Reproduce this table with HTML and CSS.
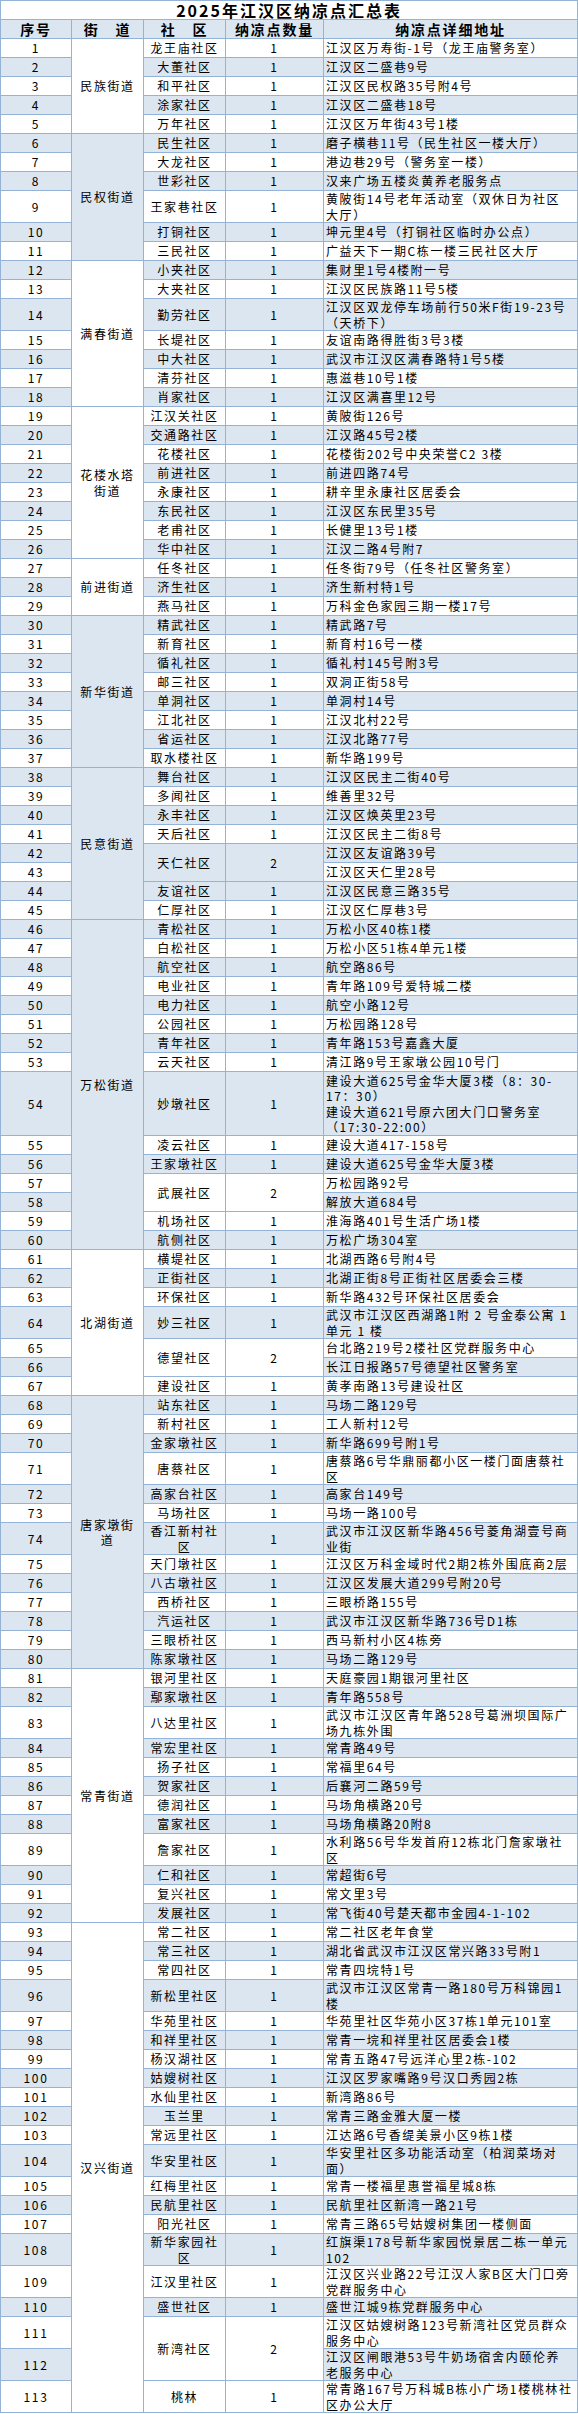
FILE: index.html
```html
<!DOCTYPE html>
<html lang="zh-CN">
<head>
<meta charset="utf-8">
<title>2025年江汉区纳凉点汇总表</title>
<link rel="stylesheet" href="styles.css">
</head>
<body>
<table class="sheet">
<colgroup><col class="c1"><col class="c2"><col class="c3"><col class="c4"><col class="c5"></colgroup>
<tr class="title-row"><td colspan="5" class="title">2025年江汉区纳凉点汇总表</td></tr>
<tr class="head-row"><th>序号</th><th>街　道</th><th>社　区</th><th>纳凉点数量</th><th>纳凉点详细地址</th></tr>

<tr class="r1"><td>1</td><td rowspan="5">民族街道</td><td>龙王庙社区</td><td>1</td><td class="addr">江汉区万寿街-1号（龙王庙警务室）</td></tr>
<tr class="r1 b"><td>2</td><td>大董社区</td><td>1</td><td class="addr">江汉区二盛巷9号</td></tr>
<tr class="r1"><td>3</td><td>和平社区</td><td>1</td><td class="addr">江汉区民权路35号附4号</td></tr>
<tr class="r1 b"><td>4</td><td>涂家社区</td><td>1</td><td class="addr">江汉区二盛巷18号</td></tr>
<tr class="r1"><td>5</td><td>万年社区</td><td>1</td><td class="addr">江汉区万年街43号1楼</td></tr>

<tr class="r1 b"><td>6</td><td rowspan="6">民权街道</td><td>民生社区</td><td>1</td><td class="addr">磨子横巷11号（民生社区一楼大厅）</td></tr>
<tr class="r1"><td>7</td><td>大龙社区</td><td>1</td><td class="addr">港边巷29号（警务室一楼）</td></tr>
<tr class="r1 b"><td>8</td><td>世彩社区</td><td>1</td><td class="addr">汉来广场五楼炎黄养老服务点</td></tr>
<tr class="r2"><td>9</td><td>王家巷社区</td><td>1</td><td class="addr">黄陂街14号老年活动室（双休日为社区<br>大厅）</td></tr>
<tr class="r1 b"><td>10</td><td>打铜社区</td><td>1</td><td class="addr">坤元里4号（打铜社区临时办公点）</td></tr>
<tr class="r1"><td>11</td><td>三民社区</td><td>1</td><td class="addr">广益天下一期C栋一楼三民社区大厅</td></tr>

<tr class="r1 b"><td>12</td><td rowspan="7" class="white">满春街道</td><td>小夹社区</td><td>1</td><td class="addr">集财里1号4楼附一号</td></tr>
<tr class="r1"><td>13</td><td>大夹社区</td><td>1</td><td class="addr">江汉区民族路11号5楼</td></tr>
<tr class="r2 b"><td>14</td><td>勤劳社区</td><td>1</td><td class="addr">江汉区双龙停车场前行50米F街19-23号<br>（天桥下）</td></tr>
<tr class="r1"><td>15</td><td>长堤社区</td><td>1</td><td class="addr">友谊南路得胜街3号3楼</td></tr>
<tr class="r1 b"><td>16</td><td>中大社区</td><td>1</td><td class="addr">武汉市江汉区满春路特1号5楼</td></tr>
<tr class="r1"><td>17</td><td>清芬社区</td><td>1</td><td class="addr">惠滋巷10号1楼</td></tr>
<tr class="r1 b"><td>18</td><td>肖家社区</td><td>1</td><td class="addr">江汉区满喜里12号</td></tr>

<tr class="r1"><td>19</td><td rowspan="8">花楼水塔<br>街道</td><td>江汉关社区</td><td>1</td><td class="addr">黄陂街126号</td></tr>
<tr class="r1 b"><td>20</td><td>交通路社区</td><td>1</td><td class="addr">江汉路45号2楼</td></tr>
<tr class="r1"><td>21</td><td>花楼社区</td><td>1</td><td class="addr">花楼街202号中央荣誉C2 3楼</td></tr>
<tr class="r1 b"><td>22</td><td>前进社区</td><td>1</td><td class="addr">前进四路74号</td></tr>
<tr class="r1"><td>23</td><td>永康社区</td><td>1</td><td class="addr">耕辛里永康社区居委会</td></tr>
<tr class="r1 b"><td>24</td><td>东民社区</td><td>1</td><td class="addr">江汉区东民里35号</td></tr>
<tr class="r1"><td>25</td><td>老甫社区</td><td>1</td><td class="addr">长健里13号1楼</td></tr>
<tr class="r1 b"><td>26</td><td>华中社区</td><td>1</td><td class="addr">江汉二路4号附7</td></tr>

<tr class="r1"><td>27</td><td rowspan="3">前进街道</td><td>任冬社区</td><td>1</td><td class="addr">任冬街79号（任冬社区警务室）</td></tr>
<tr class="r1 b"><td>28</td><td>济生社区</td><td>1</td><td class="addr">济生新村特1号</td></tr>
<tr class="r1"><td>29</td><td>燕马社区</td><td>1</td><td class="addr">万科金色家园三期一楼17号</td></tr>

<tr class="r1 b"><td>30</td><td rowspan="8">新华街道</td><td>精武社区</td><td>1</td><td class="addr">精武路7号</td></tr>
<tr class="r1"><td>31</td><td>新育社区</td><td>1</td><td class="addr">新育村16号一楼</td></tr>
<tr class="r1 b"><td>32</td><td>循礼社区</td><td>1</td><td class="addr">循礼村145号附3号</td></tr>
<tr class="r1"><td>33</td><td>邮三社区</td><td>1</td><td class="addr">双洞正街58号</td></tr>
<tr class="r1 b"><td>34</td><td>单洞社区</td><td>1</td><td class="addr">单洞村14号</td></tr>
<tr class="r1"><td>35</td><td>江北社区</td><td>1</td><td class="addr">江汉北村22号</td></tr>
<tr class="r1 b"><td>36</td><td>省运社区</td><td>1</td><td class="addr">江汉北路77号</td></tr>
<tr class="r1"><td>37</td><td>取水楼社区</td><td>1</td><td class="addr">新华路199号</td></tr>

<tr class="r1 b"><td>38</td><td rowspan="8">民意街道</td><td>舞台社区</td><td>1</td><td class="addr">江汉区民主二街40号</td></tr>
<tr class="r1"><td>39</td><td>多闻社区</td><td>1</td><td class="addr">维善里32号</td></tr>
<tr class="r1 b"><td>40</td><td>永丰社区</td><td>1</td><td class="addr">江汉区焕英里23号</td></tr>
<tr class="r1"><td>41</td><td>天后社区</td><td>1</td><td class="addr">江汉区民主二街8号</td></tr>
<tr class="r1 b"><td>42</td><td rowspan="2">天仁社区</td><td rowspan="2">2</td><td class="addr">江汉区友谊路39号</td></tr>
<tr class="r1"><td>43</td><td class="addr">江汉区天仁里28号</td></tr>
<tr class="r1 b"><td>44</td><td>友谊社区</td><td>1</td><td class="addr">江汉区民意三路35号</td></tr>
<tr class="r1"><td>45</td><td>仁厚社区</td><td>1</td><td class="addr">江汉区仁厚巷3号</td></tr>

<tr class="r1 b"><td>46</td><td rowspan="15">万松街道</td><td>青松社区</td><td>1</td><td class="addr">万松小区40栋1楼</td></tr>
<tr class="r1"><td>47</td><td>白松社区</td><td>1</td><td class="addr">万松小区51栋4单元1楼</td></tr>
<tr class="r1 b"><td>48</td><td>航空社区</td><td>1</td><td class="addr">航空路86号</td></tr>
<tr class="r1"><td>49</td><td>电业社区</td><td>1</td><td class="addr">青年路109号爱特城二楼</td></tr>
<tr class="r1 b"><td>50</td><td>电力社区</td><td>1</td><td class="addr">航空小路12号</td></tr>
<tr class="r1"><td>51</td><td>公园社区</td><td>1</td><td class="addr">万松园路128号</td></tr>
<tr class="r1 b"><td>52</td><td>青年社区</td><td>1</td><td class="addr">青年路153号嘉鑫大厦</td></tr>
<tr class="r1"><td>53</td><td>云天社区</td><td>1</td><td class="addr">清江路9号王家墩公园10号门</td></tr>
<tr class="r4 b"><td>54</td><td>妙墩社区</td><td>1</td><td class="addr">建设大道625号金华大厦3楼（8：30-<br>17：30）<br>建设大道621号原六团大门口警务室<br>（17:30-22:00）</td></tr>
<tr class="r1"><td>55</td><td>凌云社区</td><td>1</td><td class="addr">建设大道417-158号</td></tr>
<tr class="r1 b"><td>56</td><td>王家墩社区</td><td>1</td><td class="addr">建设大道625号金华大厦3楼</td></tr>
<tr class="r1"><td>57</td><td rowspan="2">武展社区</td><td rowspan="2">2</td><td class="addr">万松园路92号</td></tr>
<tr class="r1 b"><td>58</td><td class="addr">解放大道684号</td></tr>
<tr class="r1"><td>59</td><td>机场社区</td><td>1</td><td class="addr">淮海路401号生活广场1楼</td></tr>
<tr class="r1 b"><td>60</td><td>航侧社区</td><td>1</td><td class="addr">万松广场304室</td></tr>

<tr class="r1"><td>61</td><td rowspan="7">北湖街道</td><td>横堤社区</td><td>1</td><td class="addr">北湖西路6号附4号</td></tr>
<tr class="r1 b"><td>62</td><td>正街社区</td><td>1</td><td class="addr">北湖正街8号正街社区居委会三楼</td></tr>
<tr class="r1"><td>63</td><td>环保社区</td><td>1</td><td class="addr">新华路432号环保社区居委会</td></tr>
<tr class="r2 b"><td>64</td><td>妙三社区</td><td>1</td><td class="addr">武汉市江汉区西湖路1附 2 号金泰公寓 1<br>单元 1 楼</td></tr>
<tr class="r1"><td>65</td><td rowspan="2">德望社区</td><td rowspan="2">2</td><td class="addr">台北路219号2楼社区党群服务中心</td></tr>
<tr class="r1 b"><td>66</td><td class="addr">长江日报路57号德望社区警务室</td></tr>
<tr class="r1"><td>67</td><td>建设社区</td><td>1</td><td class="addr">黄孝南路13号建设社区</td></tr>

<tr class="r1 b"><td>68</td><td rowspan="13">唐家墩街<br>道</td><td>站东社区</td><td>1</td><td class="addr">马场二路129号</td></tr>
<tr class="r1"><td>69</td><td>新村社区</td><td>1</td><td class="addr">工人新村12号</td></tr>
<tr class="r1 b"><td>70</td><td>金家墩社区</td><td>1</td><td class="addr">新华路699号附1号</td></tr>
<tr class="r2"><td>71</td><td>唐蔡社区</td><td>1</td><td class="addr">唐蔡路6号华鼎丽都小区一楼门面唐蔡社<br>区</td></tr>
<tr class="r1 b"><td>72</td><td>高家台社区</td><td>1</td><td class="addr">高家台149号</td></tr>
<tr class="r1"><td>73</td><td>马场社区</td><td>1</td><td class="addr">马场一路100号</td></tr>
<tr class="r2 b"><td>74</td><td>香江新村社<br>区</td><td>1</td><td class="addr">武汉市江汉区新华路456号菱角湖壹号商<br>业街</td></tr>
<tr class="r1"><td>75</td><td>天门墩社区</td><td>1</td><td class="addr">江汉区万科金域时代2期2栋外围底商2层</td></tr>
<tr class="r1 b"><td>76</td><td>八古墩社区</td><td>1</td><td class="addr">江汉区发展大道299号附20号</td></tr>
<tr class="r1"><td>77</td><td>西桥社区</td><td>1</td><td class="addr">三眼桥路155号</td></tr>
<tr class="r1 b"><td>78</td><td>汽运社区</td><td>1</td><td class="addr">武汉市江汉区新华路736号D1栋</td></tr>
<tr class="r1"><td>79</td><td>三眼桥社区</td><td>1</td><td class="addr">西马新村小区4栋旁</td></tr>
<tr class="r1 b"><td>80</td><td>陈家墩社区</td><td>1</td><td class="addr">马场二路129号</td></tr>

<tr class="r1"><td>81</td><td rowspan="12">常青街道</td><td>银河里社区</td><td>1</td><td class="addr">天庭豪园1期银河里社区</td></tr>
<tr class="r1 b"><td>82</td><td>鄢家墩社区</td><td>1</td><td class="addr">青年路558号</td></tr>
<tr class="r2"><td>83</td><td>八达里社区</td><td>1</td><td class="addr">武汉市江汉区青年路528号葛洲坝国际广<br>场九栋外围</td></tr>
<tr class="r1 b"><td>84</td><td>常宏里社区</td><td>1</td><td class="addr">常青路49号</td></tr>
<tr class="r1"><td>85</td><td>扬子社区</td><td>1</td><td class="addr">常福里64号</td></tr>
<tr class="r1 b"><td>86</td><td>贺家社区</td><td>1</td><td class="addr">后襄河二路59号</td></tr>
<tr class="r1"><td>87</td><td>德润社区</td><td>1</td><td class="addr">马场角横路20号</td></tr>
<tr class="r1 b"><td>88</td><td>富家社区</td><td>1</td><td class="addr">马场角横路20附8</td></tr>
<tr class="r2"><td>89</td><td>詹家社区</td><td>1</td><td class="addr">水利路56号华发首府12栋北门詹家墩社<br>区</td></tr>
<tr class="r1 b"><td>90</td><td>仁和社区</td><td>1</td><td class="addr">常超街6号</td></tr>
<tr class="r1"><td>91</td><td>复兴社区</td><td>1</td><td class="addr">常文里3号</td></tr>
<tr class="r1 b"><td>92</td><td>发展社区</td><td>1</td><td class="addr">常飞街40号楚天都市金园4-1-102</td></tr>

<tr class="r1"><td>93</td><td rowspan="21">汉兴街道</td><td>常二社区</td><td>1</td><td class="addr">常二社区老年食堂</td></tr>
<tr class="r1 b"><td>94</td><td>常三社区</td><td>1</td><td class="addr">湖北省武汉市江汉区常兴路33号附1</td></tr>
<tr class="r1"><td>95</td><td>常四社区</td><td>1</td><td class="addr">常青四垸特1号</td></tr>
<tr class="r2 b"><td>96</td><td>新松里社区</td><td>1</td><td class="addr">武汉市江汉区常青一路180号万科锦园1<br>楼</td></tr>
<tr class="r1"><td>97</td><td>华苑里社区</td><td>1</td><td class="addr">华苑里社区华苑小区37栋1单元101室</td></tr>
<tr class="r1 b"><td>98</td><td>和祥里社区</td><td>1</td><td class="addr">常青一垸和祥里社区居委会1楼</td></tr>
<tr class="r1"><td>99</td><td>杨汉湖社区</td><td>1</td><td class="addr">常青五路47号远洋心里2栋-102</td></tr>
<tr class="r1 b"><td>100</td><td>姑嫂树社区</td><td>1</td><td class="addr">江汉区罗家嘴路9号汉口秀园2栋</td></tr>
<tr class="r1"><td>101</td><td>水仙里社区</td><td>1</td><td class="addr">新湾路86号</td></tr>
<tr class="r1 b"><td>102</td><td>玉兰里</td><td>1</td><td class="addr">常青三路金雅大厦一楼</td></tr>
<tr class="r1"><td>103</td><td>常远里社区</td><td>1</td><td class="addr">江达路6号香缇美景小区9栋1楼</td></tr>
<tr class="r2 b"><td>104</td><td>华安里社区</td><td>1</td><td class="addr">华安里社区多功能活动室（柏润菜场对<br>面）</td></tr>
<tr class="r1"><td>105</td><td>红梅里社区</td><td>1</td><td class="addr">常青一楼福星惠誉福星城8栋</td></tr>
<tr class="r1 b"><td>106</td><td>民航里社区</td><td>1</td><td class="addr">民航里社区新湾一路21号</td></tr>
<tr class="r1"><td>107</td><td>阳光社区</td><td>1</td><td class="addr">常青三路65号姑嫂树集团一楼侧面</td></tr>
<tr class="r2 b"><td>108</td><td>新华家园社<br>区</td><td>1</td><td class="addr">红旗渠178号新华家园悦景居二栋一单元<br>102</td></tr>
<tr class="r2"><td>109</td><td>江汉里社区</td><td>1</td><td class="addr">江汉区兴业路22号江汉人家B区大门口旁<br>党群服务中心</td></tr>
<tr class="r1 b"><td>110</td><td>盛世社区</td><td>1</td><td class="addr">盛世江城9栋党群服务中心</td></tr>
<tr class="r2"><td>111</td><td rowspan="2">新湾社区</td><td rowspan="2">2</td><td class="addr">江汉区姑嫂树路123号新湾社区党员群众<br>服务中心</td></tr>
<tr class="r2 b"><td>112</td><td class="addr">江汉区闸眼港53号牛奶场宿舍内颐伦养<br>老服务中心</td></tr>
<tr class="r2"><td>113</td><td>桃林</td><td>1</td><td class="addr">常青路167号万科城B栋小广场1楼桃林社<br>区办公大厅</td></tr>
</table>
</body>
</html>
```

FILE: styles.css
```css
html, body {
  margin: 0;
  padding: 0;
  background: #ffffff;
}

body {
  font-family: "Noto Sans CJK SC", "Noto Sans", sans-serif;
  color: #000000;
}

.sheet {
  width: 578px;
  table-layout: fixed;
  border-collapse: separate;
  border-spacing: 0;
  border-left: 1px solid #95b3d7;
  border-top: 1px solid #95b3d7;
}

.c1 { width: 71px; }
.c2 { width: 72px; }
.c3 { width: 82px; }
.c4 { width: 98px; }
.c5 { width: 254px; }

.sheet td,
.sheet th {
  box-sizing: border-box;
  padding: 0;
  border-right: 1px solid #95b3d7;
  border-bottom: 1px solid #95b3d7;
  font-size: 12px;
  font-weight: 400;
  letter-spacing: 1.6px;
  line-height: 15.5px;
  text-align: center;
  vertical-align: middle;
  white-space: nowrap;
  overflow: hidden;
  background: #ffffff;
}

.sheet td.addr {
  text-align: left;
  padding-left: 2px;
}

.title-row { height: 19px; }
.sheet td.title {
  font-size: 16px;
  font-weight: 700;
  letter-spacing: 2px;
  line-height: 17px;
  overflow: visible;
}

.head-row { height: 19px; }
.sheet th {
  font-size: 14px;
  font-weight: 700;
  letter-spacing: 1.8px;
  line-height: 17px;
  overflow: visible;
  background: #dce6f1;
}

.r1 { height: 19px; }
.r2 { height: 32px; }
.r4 { height: 64px; }

.sheet .b > td { background: #dce6f1; }
.sheet td.white { background: #ffffff; }
```
